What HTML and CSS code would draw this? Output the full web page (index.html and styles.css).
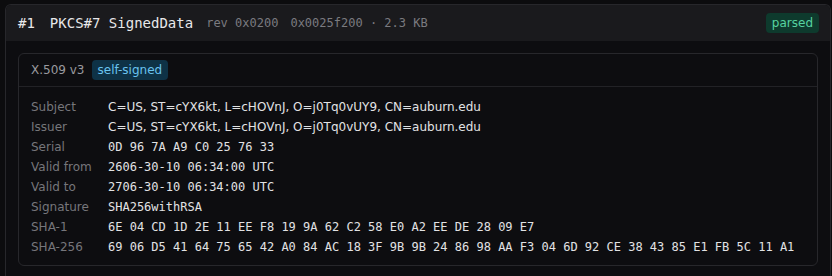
FILE: index.html
```html
<!DOCTYPE html>
<html>
<head>
<meta charset="utf-8">
<link rel="stylesheet" href="styles.css">
</head>
<body>
<div class="card">
  <div class="card-head">
    <span class="idx">#1</span>
    <span class="title">PKCS#7 SignedData</span>
    <span class="meta">rev 0x0200</span>
    <span class="meta">0x0025f200 · 2.3 KB</span>
    <span class="badge ok">parsed</span>
  </div>
  <div class="card-body">
    <div class="cert">
      <div class="cert-head">
        <span class="ver">X.509 v3</span>
        <span class="badge info">self-signed</span>
      </div>
      <div class="fields">
        <div class="k">Subject</div><div class="v">C=US, ST=cYX6kt, L=cHOVnJ, O=j0Tq0vUY9, CN=auburn.edu</div>
        <div class="k">Issuer</div><div class="v">C=US, ST=cYX6kt, L=cHOVnJ, O=j0Tq0vUY9, CN=auburn.edu</div>
        <div class="k">Serial</div><div class="v mono">0D 96 7A A9 C0 25 76 33</div>
        <div class="k">Valid from</div><div class="v mono">2606-30-10 06:34:00 UTC</div>
        <div class="k">Valid to</div><div class="v mono">2706-30-10 06:34:00 UTC</div>
        <div class="k">Signature</div><div class="v mono">SHA256withRSA</div>
        <div class="k">SHA-1</div><div class="v mono">6E 04 CD 1D 2E 11 EE F8 19 9A 62 C2 58 E0 A2 EE DE 28 09 E7</div>
        <div class="k">SHA-256</div><div class="v mono">69 06 D5 41 64 75 65 42 A0 84 AC 18 3F 9B 9B 24 86 98 AA F3 04 6D 92 CE 38 43 85 E1 FB 5C 11 A1</div>
      </div>
    </div>
  </div>
</div>
</body>
</html>
```

FILE: styles.css
```css
html, body {
  margin: 0;
  padding: 0;
  background: #0c0c0e;
  height: 100%;
  overflow: hidden;
}
body {
  padding: 4px 1px 0 5px;
  font-family: "DejaVu Sans", sans-serif;
  font-size: 12px;
  color: #e2e2e4;
}
.card {
  border: 1px solid #27272b;
  border-bottom: none;
  border-radius: 6px 6px 0 0;
  background: #0d0d10;
  min-height: 100%;
}
.card-head {
  display: flex;
  align-items: center;
  height: 36px;
  padding: 0 11px 0 12px;
  background: #1a1a1d;
  border-radius: 5px 5px 0 0;
}
.idx, .title {
  font-family: "DejaVu Sans Mono", monospace;
  font-size: 14px;
  color: #e8e8ea;
}
.idx { margin-right: 15px; }
.title { margin-right: 13px; }
.meta {
  font-family: "DejaVu Sans Mono", monospace;
  font-size: 12px;
  color: #7b7b80;
  margin-right: 12px;
}
.badge {
  display: inline-flex;
  align-items: center;
  height: 20px;
  padding: 0 6px;
  border-radius: 4px;
  font-size: 12px;
}
.ok {
  margin-left: auto;
  background: #0e3a2d;
  color: #56d3a0;
}
.info {
  background: #0e3246;
  color: #6ac3ef;
}
.card-body {
  padding: 12px;
}
.cert {
  border: 1px solid #27272b;
  border-radius: 6px;
  background: #0d0d10;
}
.cert-head {
  display: flex;
  align-items: center;
  gap: 7px;
  height: 32px;
  padding: 0 12px;
  border-bottom: 1px solid #222226;
}
.ver { color: #9a9a9f; }
.fields {
  display: grid;
  grid-template-columns: 77px 1fr;
  padding: 10px 12px 8px;
  line-height: 20px;
}
.k { color: #76767b; }
.v { color: #e2e2e4; white-space: nowrap; }
.mono { font-family: "DejaVu Sans Mono", monospace; }
```
